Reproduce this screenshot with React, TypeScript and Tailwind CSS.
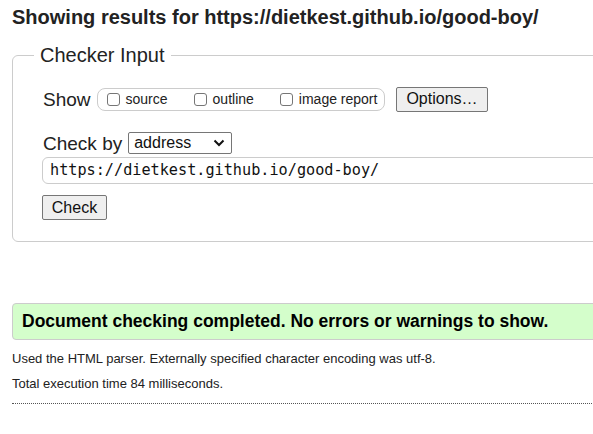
import React from 'react';

const sans = "font-['Liberation_Sans',Arial,sans-serif]";

function Box({ label }: { label: string }) {
  return (
    <label className="flex items-center gap-[6px] mr-[26px] last:mr-0">
      <span className="inline-block w-[13px] h-[13px] rounded-[3px] border border-[#767676] bg-white" />
      <span className="text-[14px] leading-none text-[#222]">{label}</span>
    </label>
  );
}

export default function App() {
  return (
    <div className={`w-full h-[434px] overflow-hidden bg-white text-[#222] ${sans}`}>
      <div className="w-[640px] pl-[12px]">
        <h2 className="pt-[6px] text-[20px] leading-[22px] font-bold text-[#222]">
          Showing results for https://dietkest.github.io/good-boy/
        </h2>

        <fieldset className="mt-[16px] w-[620px] h-[198px] border border-[#cccccc] rounded-[6px] pl-[30px] pt-[20px]">
          <legend className="ml-[-9px] px-[6px] text-[20px] leading-[22px] text-[#222]">Checker Input</legend>

          <div className="flex items-center h-[26px]">
            <span className="text-[19px] leading-none mr-[6px]">Show</span>
            <div className="flex items-center h-[23px] border border-[#cccccc] rounded-[8px] pl-[9px] pr-[7px]">
              <Box label="source" />
              <Box label="outline" />
              <Box label="image report" />
            </div>
            <button className="ml-[11px] h-[25px] px-[9px] border border-[#767676] rounded-[2px] bg-[#efefef] text-[16px] leading-none text-[#111]">
              Options…
            </button>
          </div>

          <div className="flex items-center mt-[20px] h-[22px]">
            <span className="text-[19px] leading-none mr-[6px]">Check by</span>
            <div className="flex items-center justify-between w-[104px] h-[22px] border border-[#767676] rounded-[2px] pl-[5px] pr-[6px] bg-white">
              <span className="text-[16px] leading-none text-[#111]">address</span>
              <svg width="12" height="8" viewBox="0 0 12 8" fill="none">
                <path d="M1.5 1.5 L6 6 L10.5 1.5" stroke="#111" strokeWidth="2" />
              </svg>
            </div>
          </div>

          <div className="mt-[3px] -ml-[1px] h-[27px] w-[600px] border border-[#cccccc] rounded-[6px] flex items-center pl-[7px] font-['DejaVu_Sans_Mono',monospace] text-[15.2px] text-[#111]">
            https://dietkest.github.io/good-boy/
          </div>

          <button className="mt-[11px] -ml-[1px] h-[25px] w-[65px] border border-[#767676] rounded-[2px] bg-[#efefef] text-[16px] leading-none text-[#111]">
            Check
          </button>
        </fieldset>

        <div className="mt-[61px] w-[620px] h-[37px] border border-[#cccccc] rounded-[4px] bg-[#d4fecb] flex items-center pl-[9px]">
          <span className="text-[17.5px] font-bold text-black">
            Document checking completed. No errors or warnings to show.
          </span>
        </div>

        <p className="mt-[9px] text-[13px] leading-[20px] text-[#222]">
          Used the HTML parser. Externally specified character encoding was utf-8.
        </p>
        <p className="mt-[5px] text-[13px] leading-[20px] text-[#222]">
          Total execution time 84 milliseconds.
        </p>
        <div className="mt-[9px] w-[620px] border-t border-dotted border-[#555]" />
      </div>
    </div>
  );
}
